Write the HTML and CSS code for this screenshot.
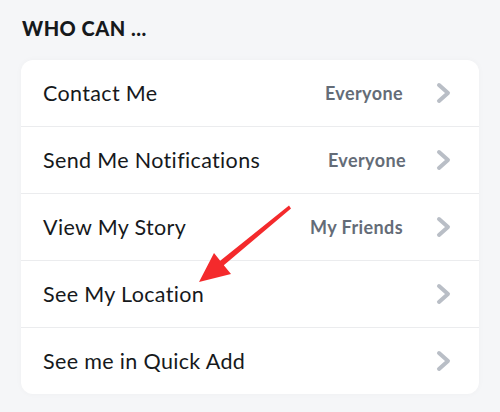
FILE: index.html
```html
<!DOCTYPE html>
<html>
<head>
  <title>Who Can</title>
  <link rel="stylesheet" href="styles.css">
</head>
<body>
  <div class="page">
    <h2 class="section-title">WHO CAN ...</h2>
    <div class="card">
      <div class="row">
        <span class="label">Contact Me</span>
        <span class="value">Everyone</span>
        <svg class="chevron" viewBox="0 0 16 22"><path d="M3 3 L12 11 L3 19" /></svg>
      </div>
      <div class="row">
        <span class="label">Send Me Notifications</span>
        <span class="value shift">Everyone</span>
        <svg class="chevron" viewBox="0 0 16 22"><path d="M3 3 L12 11 L3 19" /></svg>
      </div>
      <div class="row">
        <span class="label">View My Story</span>
        <span class="value">My Friends</span>
        <svg class="chevron" viewBox="0 0 16 22"><path d="M3 3 L12 11 L3 19" /></svg>
      </div>
      <div class="row">
        <span class="label">See My Location</span>
        <svg class="chevron" viewBox="0 0 16 22"><path d="M3 3 L12 11 L3 19" /></svg>
      </div>
      <div class="row">
        <span class="label">See me in Quick Add</span>
        <svg class="chevron" viewBox="0 0 16 22"><path d="M3 3 L12 11 L3 19" /></svg>
      </div>
    </div>
  </div>

  <!-- annotation arrow drawn over the card -->
  <svg class="annotation" viewBox="0 0 500 412">
    <path d="M289 205.6 L291 208.4 L223.8 265.2 L231 274 L199 282 L214 253 L220.2 260.8 Z" fill="#f42a2c" />
  </svg>
</body>
</html>
```

FILE: styles.css
```css
body {
  margin: 0;
  background-color: #f5f6f8;
  font-family: Lato, "Open Sans", sans-serif;
  color: #16191c;
}

.page {
  padding: 16px 21px 19px 21px;
}

.section-title {
  margin: 0 0 19px 1px;
  font-size: 20px;
  font-weight: 900;
  letter-spacing: 0.5px;
  line-height: 25px;
  color: #16191c;
}

.card {
  background-color: #fff;
  border-radius: 12px;
  box-shadow: 0 0 6px rgba(0, 0, 0, 0.03);
}

.row {
  display: flex;
  align-items: center;
  height: 66px;
  padding: 0 27px 0 22px;
  border-bottom: 1px solid #ebecee;
}

.row:last-child {
  border-bottom: none;
}

.label {
  flex: 1;
  font-size: 21.5px;
  letter-spacing: 0.35px;
}

.value {
  margin-right: 33px;
  font-size: 18px;
  font-weight: 700;
  color: #646c77;
  letter-spacing: 0.4px;
}

.value.shift {
  margin-right: 30px;
}

.chevron {
  width: 16px;
  height: 22px;
  fill: none;
  stroke: #b9bec6;
  stroke-width: 4;
  stroke-linecap: round;
  stroke-linejoin: round;
}

.annotation {
  position: absolute;
  top: 0;
  left: 0;
  width: 500px;
  height: 412px;
  pointer-events: none;
}
```
